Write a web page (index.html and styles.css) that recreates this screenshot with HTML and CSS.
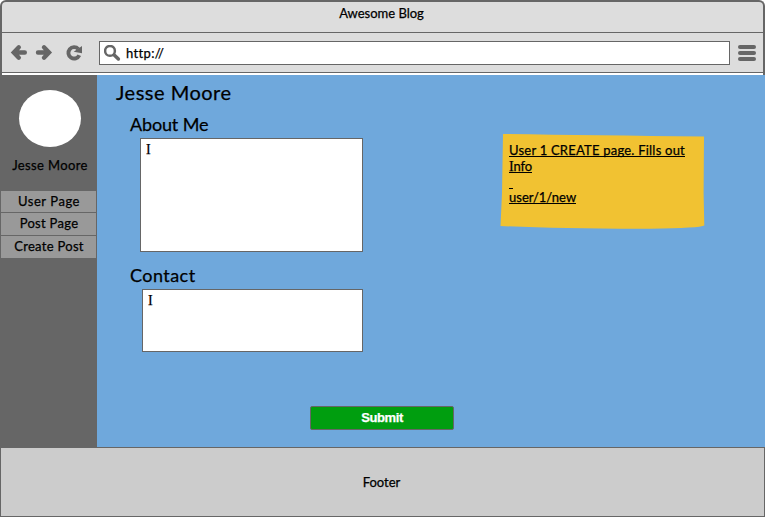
FILE: index.html
```html
<!DOCTYPE html>
<html lang="en">
<head>
<meta charset="utf-8">
<title>Awesome Blog</title>
<link rel="stylesheet" href="styles.css">
</head>
<body>
<header class="browser">
  <div class="titlebar"><span class="t-title">Awesome Blog</span></div>
  <div class="toolbar">
    <svg class="nav-icons" width="76" height="20" viewBox="0 0 76 20" fill="none" stroke="#666" stroke-width="4.400" stroke-linecap="round" stroke-linejoin="miter">
      <path d="M10.800 4.300 5.800 9.500l5 5.200M7 9.500h9.800"/>
      <path d="M36 4.300 41 9.500l-5 5.200M30 9.500h10"/>
      <path d="M70.300 6A5.700 5.700 0 1 0 71.300 12.200" stroke-width="3.900" stroke-linecap="butt"/>
      <path d="M74 3v7.200l-8.300-1.400z" fill="#666" stroke="none"/>
    </svg>
    <div class="address">
      <svg class="search" width="18" height="18" viewBox="0 0 18 18" fill="none" stroke="#666">
        <circle cx="6" cy="5.900" r="4.900" stroke-width="2.500"/>
        <path d="m10.200 10 4.200 4" stroke-width="3.500" stroke-linecap="round"/>
      </svg>
      <span class="t-url">http://</span>
    </div>
    <div class="burger"><i></i><i></i><i></i></div>
  </div>
</header>
<div class="content">
  <aside class="sidebar">
    <div class="avatar"></div>
    <div class="name"><span class="t-name">Jesse Moore</span></div>
    <nav class="menu">
      <a class="item"><span class="t-user">User Page</span></a>
      <a class="item"><span class="t-post">Post Page</span></a>
      <a class="item"><span class="t-create">Create Post</span></a>
    </nav>
  </aside>
  <main class="profile">
    <section class="form">
      <h1><span class="t-h1">Jesse Moore</span></h1>
      <h2><span class="t-about">About Me</span></h2>
      <div class="field about"><span class="serif-i">I</span></div>
      <h2 class="contact-title"><span class="t-contact">Contact</span></h2>
      <div class="field contact"><span class="serif-i">I</span></div>
      <button class="submit"><span class="t-submit">Submit</span></button>
    </section>
    <aside class="note">
      <svg class="paper" width="205" height="97" viewBox="0 0 205 97"><path d="M3 1Q90 2.500 204 3.500L203.600 60 204.300 92.500Q200 95 150 95.800Q60 96 .5 93L2 60Z" fill="#f1c232"/></svg>
      <p><span class="t-n1">User 1 CREATE page. Fills out</span></p>
      <p><span class="t-n2"><span class="serif-i">I</span>nfo</span></p>
      <p class="blank"><span>&nbsp;</span></p>
      <p><span class="t-n3">user/1/new</span></p>
    </aside>
  </main>
</div>
<footer class="footer"><span class="t-footer">Footer</span></footer>
</body>
</html>
```
FILE: styles.css
```css
* { box-sizing: border-box; }
body {
  margin: 0;
  width: 765px;
  height: 517px;
  overflow: hidden;
  background: #fff;
  color: #000;
  font: 13px/16px Lato, "Liberation Sans", sans-serif;
  -webkit-text-stroke: 0.25px currentColor;
}
h1, h2, p { margin: 0; font-weight: 400; white-space: nowrap; }
.browser {
  height: 75px;
  border: 2px solid #666;
  border-bottom: 0;
  border-radius: 6px 6px 0 0;
  background: #ddd;
}
.titlebar {
  height: 31px;
  padding: 3px 2px 0 0;
  border-bottom: 1px solid #666;
  text-align: center;
}
.toolbar {
  display: flex;
  height: 42px;
  padding: 8px 0 0 6px;
  border-bottom: 2px solid #fff;
  box-shadow: inset 0 -1px #666;
}
.nav-icons { margin: 2px 15px 0 0; }
.address {
  display: flex;
  width: 631px;
  height: 24px;
  padding: 3px 4px;
  border: 1px solid #666;
  background: #fff;
}
.t-url { margin-left: 4px; letter-spacing: 0.35px; }
.burger { display: grid; gap: 2px; align-content: start; padding: 4px 0 0 8px; }
.burger i { width: 18px; height: 4px; border-radius: 2px; background: #666; }
.content { display: flex; height: 372px; }
.sidebar { width: 97px; background: #666; padding: 15px 1px 0; }
.avatar { width: 62px; height: 57px; margin-left: 18px; border-radius: 50%; background: #fff; }
.name { margin-top: 10px; padding-left: 3px; text-align: center; letter-spacing: 0.38px; }
.menu { display: grid; gap: 1px; grid-template-rows: 21px 22px 22px; margin-top: 18px; }
.item { padding-left: 1px; background: #999; text-align: center; line-height: 21px; letter-spacing: 0.3px; }
.t-user { letter-spacing: 0.55px; }
.profile { display: flex; flex: 1; background: #6fa8dc; }
.form { width: 403px; }
h1 { height: 38px; padding: 4px 0 0 19px; font-size: 20px; line-height: 26px; letter-spacing: 0.5px; }
h2 { height: 25px; padding-left: 33px; font-size: 18px; line-height: 22px; }
.t-about { letter-spacing: -0.15px; }
.t-contact { letter-spacing: 0.45px; }
.contact-title { margin-top: 12px; }
.field { margin-left: 43px; width: 223px; height: 114px; padding: 2px 5px; border: 1px solid #666; background: #fff; }
.contact { width: 221px; height: 63px; margin-left: 45px; }
.serif-i { font-family: "Liberation Serif", serif; font-size: 14px; }
.submit {
  display: block;
  width: 144px;
  height: 24px;
  margin: 54px 0 0 213px;
  padding: 0;
  border: 1px solid #666;
  border-radius: 2px;
  background: #009e0f;
  color: #fff;
  font: bold 13px/20px "Liberation Sans", sans-serif;
  letter-spacing: -0.4px;
}
.note { position: relative; width: 205px; height: 97px; margin-top: 58px; padding: 9px 0 0 9px; }
.paper { position: absolute; left: 0; top: 0; }
.note p { position: relative; height: 16px; }
.note p > span { display: inline-block; height: 15px; border-bottom: 1px solid #000; }
.note .t-n1 { letter-spacing: 0.22px; }
.note .t-n2 { letter-spacing: -0.1px; }
.note .blank > span { width: 4px; }
.note .blank { height: 15px; }
.footer { height: 70px; padding-right: 2px; border: 1px solid #666; background: #ccc; text-align: center; line-height: 69px; }
```
